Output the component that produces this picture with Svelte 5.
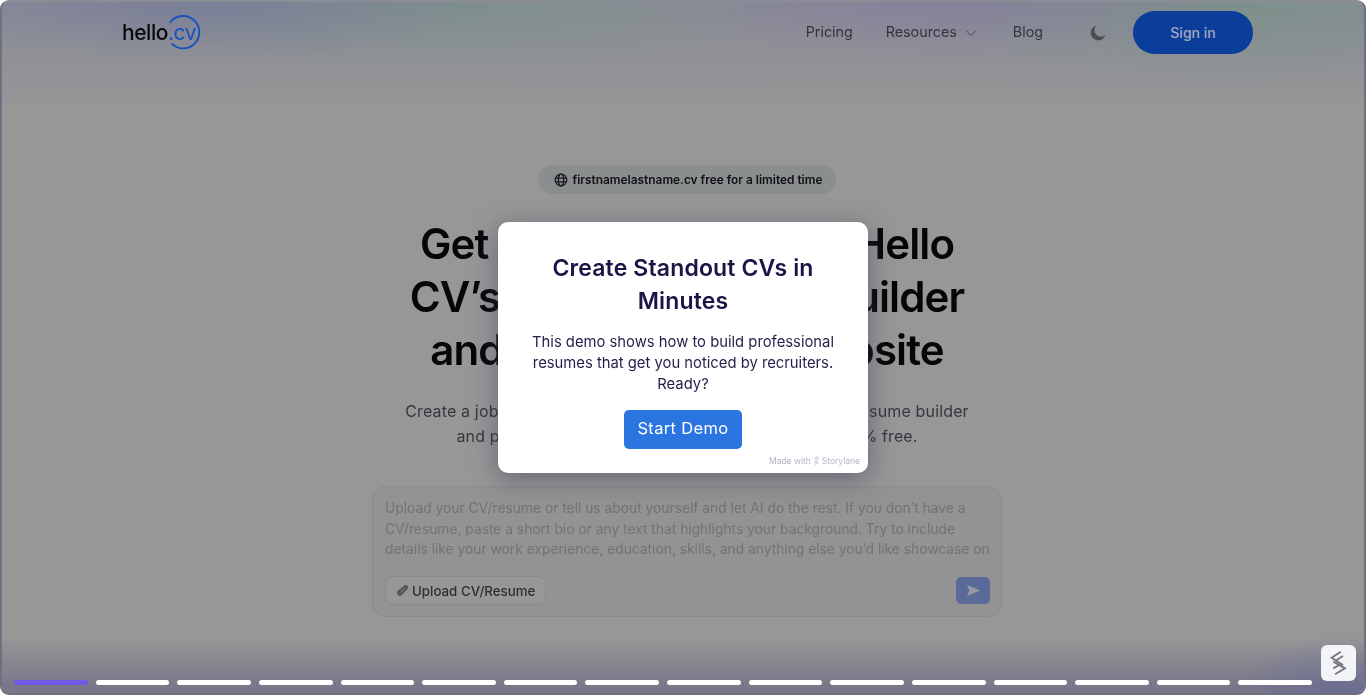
<script lang="ts">
  const links = ['Pricing', 'Resources', 'Blog'];
  const steps = Array.from({ length: 16 }, (_, i) => i);
</script>

<div class="stage">
  <div class="glow"></div>

  <div class="page">
    <header class="nav">
      <a class="logo" href="#top">
        hello<span class="dot">.cv</span>
        <svg class="ring" viewBox="0 0 36 36" width="36" height="36" fill="none" aria-hidden="true">
          <path d="M5.2 8.4A16.2 16.2 0 1 1 7 29.9" stroke="#1a52bd" stroke-width="1.9" stroke-linecap="round" />
        </svg>
      </a>
      <nav class="links">
        {#each links as link}
          <a href="#top" class="link">
            {link}
            {#if link === 'Resources'}
              <svg class="chev" viewBox="0 0 12 8" width="12" height="8" fill="none" aria-hidden="true">
                <path d="M1 1.5l5 5 5-5" stroke="#48484f" stroke-width="1" />
              </svg>
            {/if}
          </a>
        {/each}
      </nav>
      <svg class="moon" viewBox="0 0 20 20" width="18" height="18" aria-hidden="true">
        <path d="M8.1 1.7a8.4 8.4 0 1 0 10.3 10.6A7.4 7.4 0 0 1 8.1 1.7z" fill="#4d4d52" />
      </svg>
      <button class="signin">Sign in</button>
    </header>

    <main class="hero">
      <div class="badge">
        <svg viewBox="0 0 16 16" width="14" height="14" fill="none" stroke="#17171c" stroke-width="1.4" aria-hidden="true">
          <circle cx="8" cy="8" r="6.6" />
          <ellipse cx="8" cy="8" rx="3" ry="6.6" />
          <path d="M1.6 5.8h12.8M1.6 10.2h12.8" />
        </svg>
        firstnamelastname.cv free for a limited time
      </div>

      <h1>Get hired quicker with Hello<br />CV’s AI-designed CV builder<br />and your personal website</h1>

      <p class="sub">Create a job-winning CV in minutes using our AI-powered resume builder<br />and personal website, all in one place, and that’s 100% free.</p>

      <div class="composer">
        <p class="placeholder">Upload your CV/resume or tell us about yourself and let AI do the rest. If you don’t have a CV/resume, paste a short bio or any text that highlights your background. Try to include details like your work experience, education, skills, and anything else you’d like showcase on</p>
        <div class="actions">
          <button class="upload">
            <svg viewBox="0 0 14 14" width="13" height="13" aria-hidden="true">
              <path d="M9.2 1.4a2.6 2.6 0 0 1 3.5 3.6L6.6 11.6a3.1 3.1 0 0 1-4.6-4.2z" fill="#55555b" />
              <path d="M9.6 4.2L4.8 9.4" stroke="#8d8d8f" stroke-width="0.8" />
            </svg>
            Upload CV/Resume
          </button>
          <button class="send" aria-label="Send">
            <svg viewBox="0 0 16 14" width="15" height="13" aria-hidden="true">
              <path d="M1 1l14 6-14 6 2.6-6z" fill="#9a9ba0" />
            </svg>
          </button>
        </div>
      </div>
    </main>
  </div>

  <div class="overlay">
    <section class="modal">
      <h2>Create Standout CVs in Minutes</h2>
      <p>This demo shows how to build professional resumes that get you noticed by recruiters. Ready?</p>
      <button class="start">Start Demo</button>
      <div class="made">
        Made with
        <svg viewBox="0 0 10 14" width="7" height="11" fill="none" stroke="#b4b4c4" stroke-width="1.1" aria-hidden="true">
          <path d="M7 1L2.5 4 7 6.5M3 7.5L7.5 10 3 13M8.5 3L5 5.2M1.5 11L5 8.8" />
        </svg>
        Storylane
      </div>
    </section>
  </div>

  <div class="progress">
    {#each steps as s}
      <span class="step" class:current={s === 0}></span>
    {/each}
  </div>

  <div class="widget">
    <svg viewBox="0 0 35 36" width="35" height="36" fill="none" stroke="#77777f" stroke-width="1.9" aria-hidden="true">
      <path d="M19.7 6.7L10.7 12.7 22 20M22 11L15.7 15M12.3 16.7L24 23.3 14 29.3M12.3 23.3L18.3 20" />
    </svg>
  </div>
</div>

<style>
  :global(body) {
    margin: 0;
    background: #fff;
    font-family: Inter, "Liberation Sans", sans-serif;
  }

  .stage {
    position: relative;
    width: 1366px;
    height: 695px;
    box-sizing: border-box;
    overflow: hidden;
    border: 2px solid #6f7080;
    border-top-color: #8b8d96;
    border-bottom-color: #6f6e7e;
    border-radius: 9px;
    background: #979797;
  }

  .glow {
    position: absolute;
    inset: 0;
    background:
      radial-gradient(ellipse 300px 60px at 200px 0, rgba(110, 116, 155, 0.55), transparent),
      radial-gradient(ellipse 300px 60px at 950px 0, rgba(130, 118, 160, 0.5), transparent),
      radial-gradient(ellipse 320px 70px at 450px 0, rgba(115, 148, 130, 0.45), transparent),
      radial-gradient(ellipse 300px 80px at 1230px 0, rgba(115, 148, 130, 0.55), transparent),
      radial-gradient(ellipse 120px 60px at 1345px 695px, rgba(100, 105, 150, 0.7), transparent),
      linear-gradient(to bottom, rgba(125, 130, 148, 0.55), transparent 110px),
      linear-gradient(to bottom, transparent 635px, #797788 685px);
  }

  .page {
    position: relative;
    filter: blur(0.55px);
  }

  .nav {
    display: flex;
    align-items: center;
    height: 61px;
    padding: 0 111px 0 120px;
    box-sizing: border-box;
  }

  .logo {
    position: relative;
    display: block;
    font-size: 21px;
    font-weight: 500;
    letter-spacing: -0.45px;
    color: #0a0a0a;
    text-decoration: none;
    margin-right: auto;
  }

  .dot { color: #1a52bd; font-weight: 400; }

  .ring {
    position: absolute;
    right: -5px;
    top: -6px;
  }

  .links {
    display: flex;
    align-items: center;
    gap: 33px;
    margin-right: 46px;
  }

  .link {
    display: flex;
    align-items: center;
    gap: 8px;
    padding-bottom: 2px;
    font-size: 14.3px;
    color: #35353c;
    text-decoration: none;
  }

  .chev { margin-right: 3px; margin-top: 2px; }

  .moon { margin-right: 26px; }

  .signin {
    width: 120px;
    height: 43px;
    border: none;
    border-radius: 22px;
    background: #0b3d9b;
    color: #a3a8c0;
    font: 500 14px Inter, sans-serif;
  }

  .hero {
    display: flex;
    flex-direction: column;
    align-items: center;
    padding-top: 102px;
    margin-left: 8px;
  }

  .badge {
    display: flex;
    align-items: center;
    gap: 5px;
    height: 29px;
    padding: 0 14px 0 16px;
    border-radius: 15px;
    background: #8b8e8e;
    color: #101014;
    font-size: 11.9px;
    font-weight: 600;
  }

  h1 {
    margin: 23px 0 0;
    text-align: center;
    font-size: 42px;
    line-height: 53px;
    font-weight: 600;
    letter-spacing: -0.9px;
    white-space: nowrap;
    color: #060608;
  }

  .sub {
    margin: 23px 0 0;
    text-align: center;
    font-size: 16px;
    line-height: 25px;
    letter-spacing: 0.15px;
    white-space: nowrap;
    color: #36363f;
  }

  .composer {
    width: 630px;
    height: 131px;
    box-sizing: border-box;
    margin-top: 37px;
    padding: 11px 11px 11px 12px;
    display: flex;
    flex-direction: column;
    justify-content: space-between;
    border: 1px solid #8a8b8d;
    border-radius: 14px;
    background: #939393;
  }

  .placeholder {
    margin: 0;
    font-size: 13.8px;
    line-height: 20.5px;
    color: #727278;
  }

  .actions {
    display: flex;
    justify-content: space-between;
    align-items: center;
  }

  .upload {
    display: flex;
    align-items: center;
    gap: 3px;
    height: 29px;
    padding: 0 10px;
    border: 1px solid #898a8c;
    border-radius: 8px;
    background: #979797;
    color: #2e2e36;
    font: 500 13.3px Inter, sans-serif;
  }

  .send {
    display: flex;
    align-items: center;
    justify-content: center;
    width: 34px;
    height: 27px;
    border: none;
    border-radius: 5px;
    background: #5a6b9a;
  }

  .overlay {
    position: absolute;
    left: 496px;
    top: 220px;
  }

  .modal {
    position: relative;
    width: 370px;
    height: 251px;
    box-sizing: border-box;
    padding: 30px 20px 0;
    display: flex;
    flex-direction: column;
    align-items: center;
    text-align: center;
    background: #fff;
    border-radius: 10px;
    box-shadow: 0 6px 26px rgba(60, 60, 90, 0.55);
    color: #1a1547;
  }

  h2 {
    width: 300px;
    margin: 0;
    font-size: 23px;
    line-height: 33px;
    font-weight: 600;
    letter-spacing: 0.15px;
  }

  .modal p {
    width: 320px;
    margin: 14px 0 0;
    font-size: 14.8px;
    line-height: 21px;
    color: #221f4a;
  }

  .start {
    margin-top: 15px;
    width: 118px;
    height: 39px;
    padding: 0 0 3px;
    border: none;
    border-radius: 5px;
    background: #2a75e0;
    color: #fff;
    font: 400 16.5px Inter, sans-serif;
    letter-spacing: 0.35px;
  }

  .made {
    position: absolute;
    right: 8px;
    bottom: 7px;
    display: flex;
    align-items: center;
    gap: 2px;
    font-size: 8.5px;
    color: #b4b4c4;
  }

  .progress {
    position: absolute;
    left: 12px;
    right: 52px;
    top: 678px;
    display: flex;
    gap: 8px;
  }

  .step {
    flex: 1;
    height: 5px;
    border-radius: 3px;
    background: #fff;
  }

  .step.current { background: #6f5ae8; }

  .widget {
    position: absolute;
    left: 1319px;
    top: 643px;
    width: 35px;
    height: 36px;
    border-radius: 6px;
    background: #f3f4f7;
  }
</style>
